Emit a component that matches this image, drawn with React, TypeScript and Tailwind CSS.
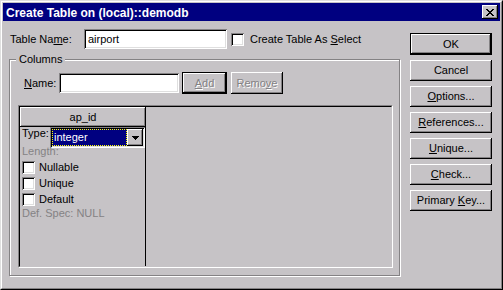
import type { ReactNode } from 'react';

// win98 bevels
const raised =
  'shadow-[inset_-1px_-1px_0_#000,inset_1px_1px_0_#fff,inset_-2px_-2px_0_#848284]';
const sunken =
  'shadow-[inset_1px_1px_0_#848284,inset_-1px_-1px_0_#fff,inset_2px_2px_0_#000,inset_-2px_-2px_0_#dfdfdf]';

const Button = ({
  children,
  isDefault = false,
  disabled = false,
  className = '',
}: {
  children: ReactNode;
  isDefault?: boolean;
  disabled?: boolean;
  className?: string;
}) => (
  <div
    className={`flex items-center justify-center bg-[#c6c3c6] ${raised} ${
      isDefault ? 'border border-black' : ''
    } ${disabled ? 'text-[#848284] [text-shadow:1px_1px_0_#fff]' : 'text-black'} ${className}`}
  >
    <span className="leading-[13px]">{children}</span>
  </div>
);

const Check = () => <div className={`w-[13px] h-[13px] shrink-0 bg-white ${sunken}`} />;

const Key = ({ children }: { children: ReactNode }) => <u className="underline">{children}</u>;

const CheckRow = ({ label }: { label: string }) => (
  <div className="flex items-center h-[16px]">
    <Check />
    <span className="ml-[4px] leading-[13px]">{label}</span>
  </div>
);

const CloseGlyph = () => (
  <svg width="8" height="7" viewBox="0 0 8 7" shapeRendering="crispEdges">
    <path
      d="M0 0h2v1H0zM6 0h2v1H6zM1 1h2v1H1zM5 1h2v1H5zM2 2h4v1H2zM3 3h2v1H3zM2 4h4v1H2zM1 5h2v1H1zM5 5h2v1H5zM0 6h2v1H0zM6 6h2v1H6z"
      fill="#000"
    />
  </svg>
);

const App = () => {
  return (
    <div className="w-[503px] h-[290px] border border-t-[#dfdfdf] border-l-[#dfdfdf] border-r-black border-b-black bg-[#c6c3c6] font-['Liberation_Sans',Arial,sans-serif] text-[11px] text-black">
      <div className="h-full flex flex-col border border-t-white border-l-white border-r-[#848284] border-b-[#848284] p-[1px]">
        {/* Title bar */}
        <div className="h-[18px] shrink-0 flex items-center justify-between bg-[#000080]">
          <span className="pl-[3px] pt-[2px] text-white font-bold text-[12px] leading-[14px]">
            Create Table on (local)::demodb
          </span>
          <div className={`w-[16px] h-[14px] mr-[2px] flex items-center justify-center bg-[#c6c3c6] ${raised}`}>
            <CloseGlyph />
          </div>
        </div>

        {/* Body */}
        <div className="flex-1 flex pl-[6px] pt-[8px]">
          {/* Left side */}
          <div className="w-[392px] flex flex-col">
            <div className="flex items-center h-[20px] pl-[1px]">
              <span className="w-[74px] leading-[13px]">
                Table Na<Key>m</Key>e:
              </span>
              <div className={`w-[143px] h-[20px] bg-white ${sunken} flex items-center px-[4px]`}>
                <span className="leading-[13px]">airport</span>
              </div>
              <div className="ml-[4px]">
                <Check />
              </div>
              <span className="ml-[6px] leading-[13px]">
                Create Table As <Key>S</Key>elect
              </span>
            </div>

            {/* Columns group */}
            <div className="relative mt-[10px] w-[391px] h-[217px] border border-[#848284] shadow-[1px_1px_0_#fff,inset_1px_1px_0_#fff] pl-[8px] pt-[12px]">
              <span className="absolute left-[6px] top-[-7px] px-[3px] bg-[#c6c3c6] leading-[13px]">
                Columns
              </span>

              <div className="flex items-center h-[22px] pl-[6px]">
                <span className="w-[35px] leading-[13px]">
                  <Key>N</Key>ame:
                </span>
                <div className={`w-[120px] h-[20px] bg-white ${sunken}`} />
                <Button isDefault disabled className="ml-[3px] w-[45px] h-[22px]">
                  <Key>A</Key>dd
                </Button>
                <Button disabled className="ml-[4px] w-[52px] h-[22px]">
                  Remo<Key>v</Key>e
                </Button>
              </div>

              {/* Column grid */}
              <div className="mt-[11px] w-[375px] h-[163px] border border-t-[#848284] border-l-[#848284] border-r-white border-b-white">
                <div className="h-full flex border border-t-black border-l-black border-r-[#c6c3c6] border-b-[#c6c3c6]">
                  <div className="w-[126px] h-full flex flex-col">
                    <Button className="h-[20px] shrink-0">ap_id</Button>
                    <div className="flex-1 flex flex-col border-r border-black pl-[2px]">
                      <div className="flex h-[21px]">
                        <span className="w-[28px] leading-[13px]">Type:</span>
                        <div className={`w-[95px] h-[21px] shrink-0 bg-white ${sunken} p-[2px] flex`}>
                          <div className="flex-1 flex items-center bg-[#000080] border border-dotted border-[#ffff00] pl-[1px]">
                            <span className="text-white leading-[13px]">integer</span>
                          </div>
                          <div className={`w-[16px] h-full flex items-center justify-center bg-[#c6c3c6] ${raised}`}>
                            <svg width="7" height="4" viewBox="0 0 7 4" shapeRendering="crispEdges">
                              <path d="M0 0h7v1H0zM1 1h5v1H1zM2 2h3v1H2zM3 3h1v1H3z" fill="#000" />
                            </svg>
                          </div>
                        </div>
                      </div>
                      <span className="mt-[-3px] leading-[13px] text-[#848284]">Length:</span>
                      <div className="mt-[1px] flex flex-col">
                        <CheckRow label="Nullable" />
                        <CheckRow label="Unique" />
                        <CheckRow label="Default" />
                      </div>
                      <span className="leading-[13px] text-[#848284]">Def. Spec: NULL</span>
                    </div>
                  </div>
                </div>
              </div>
            </div>
          </div>

          {/* Right side buttons */}
          <div className="ml-[9px] mt-[4px] flex flex-col gap-[5px]">
            <Button isDefault className="w-[82px] h-[22px]">OK</Button>
            <Button className="w-[82px] h-[21px]">Cancel</Button>
            <Button className="w-[82px] h-[21px]">
              <Key>O</Key>ptions...
            </Button>
            <Button className="w-[82px] h-[21px]">
              <Key>R</Key>eferences...
            </Button>
            <Button className="w-[82px] h-[21px]">
              <Key>U</Key>nique...
            </Button>
            <Button className="w-[82px] h-[21px]">
              <Key>C</Key>heck...
            </Button>
            <Button className="w-[82px] h-[21px]">
              Primary <Key>K</Key>ey...
            </Button>
          </div>
        </div>
      </div>
    </div>
  );
};

export default App;
